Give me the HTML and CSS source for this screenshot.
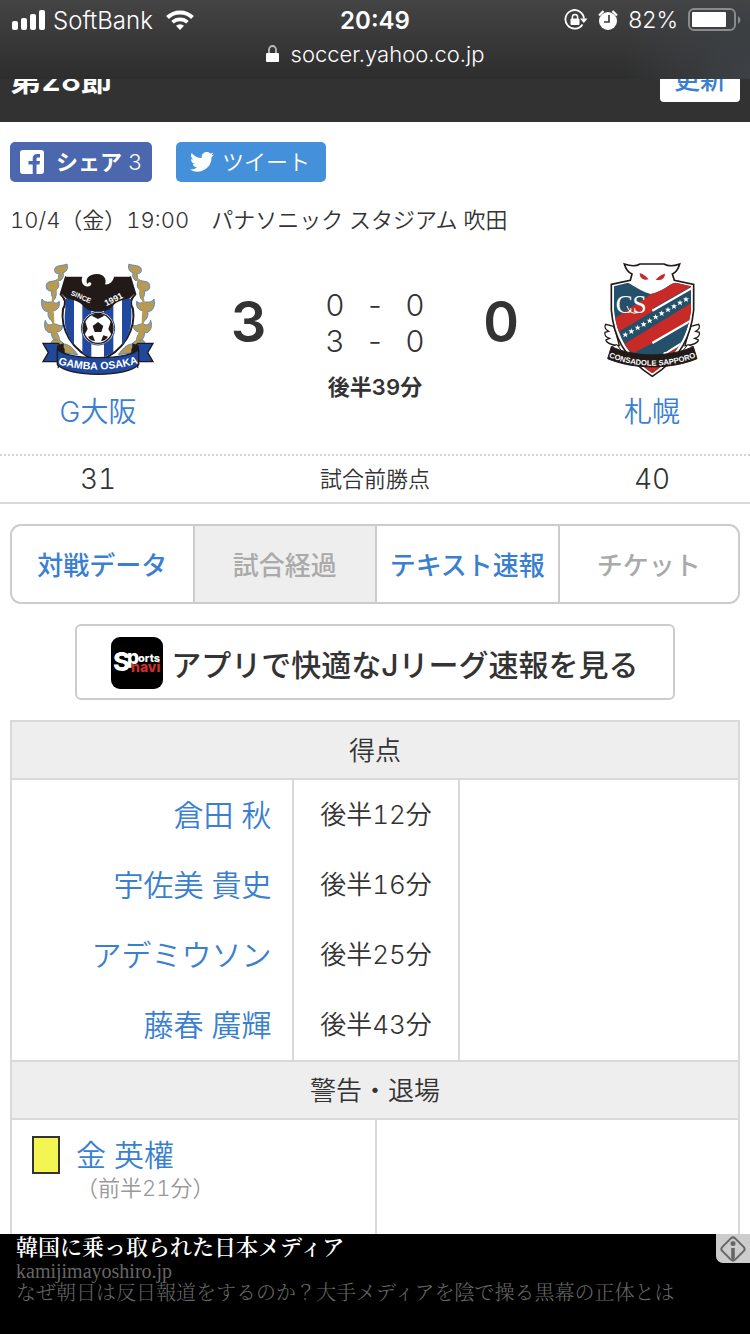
FILE: index.html
```html
<!DOCTYPE html>
<html lang="ja">
<head>
    <meta charset="UTF-8">
    <meta name="viewport" content="width=device-width, initial-scale=1.0">
    <title>G大阪 vs 札幌</title>
    <link rel="stylesheet" href="styles.css">
</head>
<body>
    <div class="browser-bar">
        <div class="status">
            <div class="status-left">
                <svg width="34" height="20" viewBox="0 0 34 20" fill="#fff">
                    <rect x="0" y="11" width="6" height="9" rx="2"/>
                    <rect x="9" y="8" width="6" height="12" rx="2"/>
                    <rect x="18" y="4" width="6" height="16" rx="2"/>
                    <rect x="27" y="0" width="6" height="20" rx="2"/>
                </svg>
                <span class="carrier">SoftBank</span>
                <svg class="wifi" width="28" height="20" viewBox="0 0 28 20">
                    <path d="M1.500 7.500A18 18 0 0 1 26.500 7.500" fill="none" stroke="#fff" stroke-width="4"/>
                    <path d="M6.500 12.300A11 11 0 0 1 21.500 12.300" fill="none" stroke="#fff" stroke-width="3.600"/>
                    <path d="M10 15.800A6 6 0 0 1 18 15.800L14 20Z" fill="#fff"/>
                </svg>
            </div>
            <span class="time">20:49</span>
            <div class="status-right">
                <svg width="24" height="22" viewBox="0 0 24 22">
                    <path d="M18.500 15.500A9.300 9.300 0 1 1 20 9.500" fill="none" stroke="#fff" stroke-width="1.800"/>
                    <path d="M16 9.500H23.500L19.800 14Z" fill="#fff"/>
                    <rect x="6.500" y="9.500" width="9" height="6.500" rx="1" fill="#fff"/>
                    <path d="M8.400 10V8a2.600 2.600 0 0 1 5.200 0V10" fill="none" stroke="#fff" stroke-width="1.500"/>
                </svg>
                <svg width="20" height="20" viewBox="0 0 20 20">
                    <circle cx="10" cy="11" r="9" fill="#fff"/>
                    <path d="M1 5.500L5.500 1M19 5.500L14.500 1" stroke="#fff" stroke-width="2.200"/>
                    <path d="M11 5V12H6" fill="none" stroke="#3e3e3e" stroke-width="1.700"/>
                </svg>
                <span class="percent">82%</span>
                <svg width="54" height="24" viewBox="0 0 54 24">
                    <rect x="1" y="1" width="46" height="21" rx="5" fill="none" stroke="#8b8b8b" stroke-width="2"/>
                    <rect x="4" y="4" width="34" height="15" rx="1" fill="#fff"/>
                    <path d="M50 8Q55 12 50 16Z" fill="#8b8b8b"/>
                </svg>
            </div>
        </div>
        <div class="address">
            <svg width="13" height="18" viewBox="0 0 13 18">
                <path d="M3 9V4.500a3.500 3.500 0 0 1 7 0V9" fill="none" stroke="#bbb" stroke-width="1.800"/>
                <rect x="0" y="8" width="13" height="9" rx="1" fill="#fff"/>
            </svg>
            <span>soccer.yahoo.co.jp</span>
        </div>
    </div>

    <header class="page-header">
        <h1>第28節</h1>
        <button type="button" class="btn-reload">更新</button>
    </header>

    <main>
        <div class="share">
            <a href="#" class="btn-share">
                <svg width="24" height="24" viewBox="0 0 24 24">
                    <rect width="24" height="24" rx="3" fill="#fff"/>
                    <path d="M20 4V7.500H18C16.800 7.500 16.500 8 16.500 9V11H20L19.500 14.500H16.500V24H12.700V14.500H8.500V11H12.700V8.500C12.700 5.500 14.500 4 17 4Z" fill="#4b67ae"/>
                </svg>
                <b>シェア</b>
                <span>3</span>
            </a>
            <a href="#" class="btn-tweet">
                <svg width="24" height="20" viewBox="0 0 24 20">
                    <path fill="#fff" d="M24 2.400a10 10 0 0 1-2.800.8A5 5 0 0 0 23.300.4a10 10 0 0 1-3.100 1.200A4.900 4.900 0 0 0 11.800 6 14 14 0 0 1 1.700.9a4.900 4.900 0 0 0 1.500 6.600A5 5 0 0 1 1 6.900a4.900 4.900 0 0 0 3.900 4.900 5 5 0 0 1-2.200.1 4.900 4.900 0 0 0 4.600 3.400A10 10 0 0 1 0 17.500 14 14 0 0 0 21.500 5.100 10 10 0 0 0 24 2.400Z"/>
                </svg>
                <span>ツイート</span>
            </a>
        </div>
        <p class="match-info">10/4（金）19:00　パナソニック スタジアム 吹田</p>

        <section class="score-board">
            <a href="#" class="team">
                <svg class="crest" width="114" height="116" viewBox="64 40 342 348">
                    <g id="branch" fill="#b99a50" stroke="#4f8bd0" stroke-width="3">
                        <path d="M142 46C131 52 107 48 105 62C103 72 112 77 119 74C115 82 115 89 121 97C131 88 133 80 130 72C141 70 146 59 142 46Z"/>
                        <path d="M112 93C100 101 82 94 80 110C78 122 87 130 97 126C93 137 96 146 105 152C111 141 111 132 107 124C118 121 121 106 112 93Z"/>
                        <path d="M67 151C62 173 72 191 86 188C83 199 87 210 97 218C101 208 101 199 98 187C114 185 121 175 119 158C108 169 103 159 92 160C80 161 73 160 67 151Z"/>
                        <path d="M77 215C70 237 80 255 96 252C94 265 103 279 120 284C121 270 117 260 110 251C123 249 129 241 129 229C119 236 112 222 98 227C86 232 80 225 77 215Z"/>
                        <path d="M94 282C100 269 112 275 121 276L134 286C151 288 162 302 174 318L132 312Z"/>
                        <path fill="none" stroke="#b99a50" stroke-width="7" d="M119 86C106 106 112 120 104 140C94 160 98 190 100 205C98 230 108 255 118 276"/>
                    </g>
                    <use href="#branch" transform="translate(470 0) scale(-1 1)"/>
                    <path fill="#fff" stroke="#211a18" stroke-width="6" d="M138 87L180 120H290L332 87L347 137C332 152 330 163 340 181C348 235 320 306 235 338C150 306 122 235 130 181C140 163 138 152 123 137Z"/>
                    <path fill="#20489f" d="M137 150H163V290C132 250 133 211 137 181ZM188 150H215V326L188 314ZM253 150H281V312L253 326ZM307 150H333C338 211 338 250 307 290Z"/>
                    <path fill="#211a18" d="M138 84H188C184 95 187 109 199 113C209 116 216 110 215 103C209 98 206 102 203 106C196 91 206 77 232 76C254 76 262 93 256 107C267 109 280 100 283 84H332L347 133L329 150C310 150 286 162 279 172C266 190 253 182 235 195C217 182 204 190 191 172C184 162 160 150 141 150L123 133Z"/>
                    <text transform="translate(152 138) rotate(24)" class="crest-small">SINCE</text>
                    <text transform="translate(260 173) rotate(-27)" class="crest-year">1991</text>
                    <circle cx="235" cy="239" r="50" fill="#fff" stroke="#20489f" stroke-width="3"/>
                    <circle cx="235" cy="239" r="45" fill="#fff" stroke="#211a18" stroke-width="4"/>
                    <path fill="#211a18" d="M235 220L251 232L245 250H225L219 232ZM216 201Q235 188 254 201L235 211ZM274 216Q285 239 276 259L266 241ZM196 216Q185 239 194 259L204 241ZM205 264L219 260L226 277Q213 277 205 264ZM265 264L251 260L244 277Q257 277 265 264Z"/>
                    <path fill="#20489f" stroke="#211a18" stroke-width="4" d="M70 284H116L133 302V341L116 355V339H70L86 312ZM400 284H354L337 302V341L354 355V339H400L384 312Z"/>
                    <path fill="#211a18" d="M132 284L132 320L112 305V291ZM338 284V320L358 305V291Z"/>
                    <path fill="#20489f" stroke="#211a18" stroke-width="4" d="M113 300C122 318 175 327 235 327C295 327 348 318 357 300V348C340 367 290 377 235 377C180 377 130 367 113 348Z"/>
                    <path id="gambaArc" fill="none" d="M117 347Q235 380 354 344"/>
                    <text class="crest-gamba" text-anchor="middle"><textPath href="#gambaArc" startOffset="50%">GAMBA OSAKA</textPath></text>
                </svg>
                <span>G大阪</span>
            </a>
            <strong class="total">3</strong>
            <div class="halves">
                <div class="half"><span>0</span><span>-</span><span>0</span></div>
                <div class="half"><span>3</span><span>-</span><span>0</span></div>
                <p class="clock">後半39分</p>
            </div>
            <strong class="total">0</strong>
            <a href="#" class="team">
                <svg class="crest" width="98" height="116" viewBox="70 36 294 348">
                    <path id="feathers" fill="#fff" stroke="#211a18" stroke-width="4" d="M102 229L78 223C72 231 78 239 87 244L76 247C73 256 80 262 90 265L79 270C80 281 96 284 119 287L109 249Z"/>
                    <use href="#feathers" transform="translate(435 0) scale(-1 1)"/>
                    <path fill="#fff" stroke="#211a18" stroke-width="5" d="M95 103L152 91L157 72C147 68 138 56 134 42C151 48 170 49 181 42H253C265 49 284 48 300 42C296 56 288 68 278 72L284 91L342 103V180C335 254 306 322 218 379C130 322 101 254 95 180Z"/>
                    <clipPath id="sapporoShield"><path d="M103 109L145 98C165 108 178 121 213 132C255 122 270 100 288 98L334 109V180C326 247 299 313 218 370C137 313 110 247 103 180Z"/></clipPath>
                    <g clip-path="url(#sapporoShield)">
                        <path fill="#24506a" d="M95 90H340V380H95Z"/>
                        <path fill="#c82b27" d="M95 212L286 85L345 103L220 175V184L110 250ZM130 284L345 153V219L220 282L165 312ZM188 352L345 264V380H180Z"/>
                        <path fill="none" stroke="#fff" stroke-width="7" d="M218 182L340 112M252 312L340 260"/>
                        <path fill="#24506a" d="M160 310L218 280L340 212V250L260 305Z"/>
                        <path fill="none" stroke="#fff" stroke-width="7" d="M218 279L340 208"/>
                    </g>
                    <path id="star" fill="#fff" d="M137 245L139 251H146L141 255L143 262L137 258L131 262L133 255L128 251H135Z"/>
                    <use href="#star" x="18" y="-10"/>
                    <use href="#star" x="37" y="-21"/>
                    <use href="#star" x="55" y="-31"/>
                    <use href="#star" x="73" y="-42"/>
                    <use href="#star" x="91" y="-53"/>
                    <use href="#star" x="109" y="-64"/>
                    <use href="#star" x="128" y="-75"/>
                    <use href="#star" x="146" y="-85"/>
                    <use href="#star" x="164" y="-96"/>
                    <use href="#star" x="182" y="-106"/>
                    <path fill="#c82b27" d="M180 69C191 72 200 79 207 88C193 92 180 86 180 69ZM256 71C246 73 237 79 228 89C243 92 256 87 256 71Z"/>
                    <text x="108" y="188" class="crest-cs">CS</text>
                    <path d="M142 168Q151 195 173 188" fill="none" stroke="#fff" stroke-width="3"/>
                    <path fill="#211a18" stroke="#211a18" stroke-width="3" stroke-linejoin="round" d="M95 290C170 323 265 323 341 290L352 326C275 359 160 359 84 326Z"/>
                    <path fill="#fff" stroke="#211a18" stroke-width="3" d="M95 290L112 284L125 302ZM341 290L324 284L310 302Z"/>
                    <path id="sapporoArc" fill="none" d="M86 321Q218 373 350 321"/>
                    <text class="crest-sapporo" text-anchor="middle"><textPath href="#sapporoArc" startOffset="50%">CONSADOLE SAPPORO</textPath></text>
                </svg>
                <span>札幌</span>
            </a>
        </section>

        <div class="points">
            <span class="point">31</span>
            <span class="point-label">試合前勝点</span>
            <span class="point">40</span>
        </div>

        <nav class="tabs">
            <a href="#">対戦データ</a>
            <span class="current">試合経過</span>
            <a href="#">テキスト速報</a>
            <span>チケット</span>
        </nav>

        <a href="#" class="app-link">
            <svg width="52" height="52" viewBox="0 0 52 52">
                <rect width="52" height="52" rx="9" fill="#000"/>
                <text x="20" y="35" class="logo-red">navi</text>
                <text x="2" y="34" class="logo-white"><tspan class="logo-s">S</tspan><tspan class="logo-p" x="16" y="27">p</tspan><tspan x="27" y="25">orts</tspan></text>
            </svg>
            <span>アプリで快適なJリーグ速報を見る</span>
        </a>

        <table class="goals">
            <thead>
                <tr><th colspan="3">得点</th></tr>
            </thead>
            <tbody>
                <tr><td class="home"><a href="#">倉田 秋</a></td><td class="minute">後半12分</td><td></td></tr>
                <tr><td class="home"><a href="#">宇佐美 貴史</a></td><td class="minute">後半16分</td><td></td></tr>
                <tr><td class="home"><a href="#">アデミウソン</a></td><td class="minute">後半25分</td><td></td></tr>
                <tr><td class="home"><a href="#">藤春 廣輝</a></td><td class="minute">後半43分</td><td></td></tr>
            </tbody>
        </table>
        <table class="cards">
            <thead>
                <tr><th colspan="2">警告・退場</th></tr>
            </thead>
            <tbody>
                <tr>
                    <td>
                        <div class="booking">
                            <i class="yellow-card"></i>
                            <div>
                                <a href="#">金 英權</a>
                                <small>（前半21分）</small>
                            </div>
                        </div>
                    </td>
                    <td></td>
                </tr>
            </tbody>
        </table>
    </main>

    <aside class="ad">
        <a href="#" class="ad-title">韓国に乗っ取られた日本メディア</a>
        <p class="ad-url">kamijimayoshiro.jp</p>
        <p class="ad-text">なぜ朝日は反日報道をするのか？大手メディアを陰で操る黒幕の正体とは</p>
        <button type="button" class="ad-info" aria-label="広告">
            <svg width="28" height="28" viewBox="0 0 28 28">
                <rect x="5" y="5" width="18" height="18" rx="3" transform="rotate(45 14 14)" fill="none" stroke="#666" stroke-width="2"/>
                <circle cx="14" cy="8.500" r="2.500" fill="#666"/>
                <path d="M12.200 13H15.800V23L14 26L12.200 23Z" fill="#666"/>
            </svg>
        </button>
    </aside>
</body>
</html>
```
FILE: styles.css
```css
* {
    margin: 0;
    padding: 0;
    box-sizing: border-box;
}

body {
    font-family: Inter, "Noto Sans CJK JP", sans-serif;
    font-weight: 350;
    font-variant-numeric: tabular-nums;
    color: #333;
    background-color: #fff;
    padding-bottom: 60px;
}

a {
    color: #3a7fd0;
    text-decoration: none;
}

button {
    font-family: inherit;
    border: none;
    cursor: pointer;
}

svg {
    display: block;
    flex-shrink: 0;
}

/* browser chrome */
.browser-bar {
    position: fixed;
    top: 0;
    left: 0;
    width: 100%;
    height: 79px;
    background: radial-gradient(circle at 100% 100%, #3d4247, rgba(61, 66, 71, 0) 130px), linear-gradient(#444, #2d2d2d);
    color: #fff;
    font-family: Inter, sans-serif;
    font-weight: 350;
    font-variant-numeric: normal;
    z-index: 2;
}

.status {
    display: grid;
    grid-template-columns: 1fr auto 1fr;
    align-items: center;
    height: 40px;
    padding: 0 12px;
}

.status-left,
.status-right {
    display: flex;
    align-items: center;
    gap: 7px;
}

.wifi {
    margin-left: 6px;
}

.status-right {
    justify-content: flex-end;
    gap: 10px;
    margin-right: -4px;
}

.carrier,
.time {
    font-size: 24px;
}

.percent {
    font-size: 23px;
}

.time {
    font-weight: 600;
}

.address {
    display: flex;
    justify-content: center;
    align-items: center;
    gap: 12px;
    height: 28px;
    font-size: 22px;
}

/* page header */
.page-header {
    display: flex;
    justify-content: space-between;
    align-items: center;
    margin-top: 32px;
    height: 90px;
    padding: 0 10px;
    background-color: #323232;
    color: #fff;
}

.page-header h1 {
    font-size: 31px;
    font-weight: 600;
}

.btn-reload {
    width: 80px;
    height: 50px;
    border-radius: 4px;
    background-color: #fff;
    color: #3a7fd0;
    font-size: 26px;
    font-weight: 500;
}

.share {
    display: flex;
    gap: 24px;
    padding: 20px 10px;
}

.share a {
    display: flex;
    align-items: center;
    height: 40px;
    border-radius: 5px;
    color: #fff;
    font-size: 22px;
    line-height: 36px;
    white-space: nowrap;
}

.share b {
    font-weight: 700;
}

.btn-share {
    width: 142px;
    gap: 6px;
    padding: 0 10px;
    background-color: #4b67ae;
}

.btn-share b {
    margin-left: 6px;
}

.btn-tweet {
    width: 150px;
    gap: 8px;
    padding: 0 14px;
    background-color: #4590db;
}

.match-info {
    padding: 0 10px;
    font-size: 22px;
    line-height: 36px;
}

/* score */
.score-board {
    display: grid;
    grid-template-columns: 196fr 106fr 146fr 106fr 196fr;
    padding: 24px 0 22px;
    border-bottom: 2px dotted #d4d4d4;
    text-align: center;
}

.team {
    display: flex;
    flex-direction: column;
    align-items: center;
    gap: 14px;
    font-size: 28px;
    line-height: 40px;
}

.crest-small,
.crest-year,
.crest-gamba {
    font-family: "Liberation Sans", sans-serif;
    font-weight: 700;
    fill: #fff;
}

.crest-small {
    font-size: 21px;
}

.crest-year {
    font-size: 26px;
}

.crest-gamba {
    font-family: "Liberation Sans Narrow", "Liberation Sans", sans-serif;
    font-size: 32px;
}

.crest-cs {
    font-family: "Liberation Serif", serif;
    font-size: 76px;
    fill: #fff;
}

.crest-sapporo {
    font-family: "Liberation Sans Narrow", "Liberation Sans", sans-serif;
    font-size: 23px;
    font-weight: 700;
    fill: #fff;
}

.total {
    font-size: 56px;
    font-weight: 600;
    line-height: 120px;
}

.halves {
    padding-top: 25px;
}

.half {
    display: grid;
    grid-template-columns: 40px 40px 40px;
    justify-content: center;
    font-size: 30px;
    line-height: 36px;
}

.clock {
    padding-top: 12px;
    font-size: 22px;
    font-weight: 600;
    line-height: 32px;
}

.points {
    display: grid;
    grid-template-columns: 196fr 358fr 196fr;
    height: 48px;
    line-height: 46px;
    border-bottom: 2px solid #d9d9d9;
    text-align: center;
}

.point {
    font-size: 28px;
}

.point-label {
    font-size: 22px;
}

.tabs {
    display: grid;
    grid-template-columns: repeat(4, 1fr);
    margin: 20px 10px;
    font-size: 26px;
    font-weight: 500;
    line-height: 72px;
    text-align: center;
}

.tabs > * {
    padding-top: 4px;
    border: 2px solid #ccc;
    border-right: none;
}

.tabs > :first-child {
    border-radius: 11px 0 0 11px;
}

.tabs > :last-child {
    border-right: 2px solid #ccc;
    border-radius: 0 11px 11px 0;
}

.tabs span {
    color: #aaa;
}

.tabs .current {
    background-color: #eee;
}

.app-link {
    display: flex;
    justify-content: center;
    align-items: center;
    gap: 8px;
    width: 80%;
    height: 76px;
    margin: 0 auto 20px;
    padding-top: 2px;
    border: 2px solid #ccc;
    border-radius: 6px;
    color: #333;
    font-size: 30px;
    font-weight: 500;
}

.logo-white,
.logo-red {
    font-family: Inter, sans-serif;
    font-weight: 800;
    font-size: 11px;
    fill: #fff;
}

.logo-s {
    font-size: 26px;
}

.logo-p {
    font-size: 19px;
}

.logo-red {
    font-size: 14px;
    fill: #c9302c;
}

/* goals and bookings */
table {
    width: calc(100% - 20px);
    margin: 0 10px;
    border-collapse: separate;
    border-spacing: 0;
    table-layout: fixed;
    border: 2px solid #d9d9d9;
    border-bottom: none;
}

th {
    height: 58px;
    padding-bottom: 3px;
    background-color: #eee;
    border-bottom: 2px solid #d9d9d9;
    font-size: 26px;
    font-weight: 350;
}

td + td {
    border-left: 2px solid #d9d9d9;
}

.goals {
    table-layout: auto;
}

.goals td {
    width: 38.5%;
    height: 70px;
    padding-bottom: 5px;
    font-size: 30px;
}

.goals .home {
    padding-right: 20px;
    text-align: right;
}

.goals .minute {
    width: 23%;
    font-size: 26px;
    text-align: center;
}

.cards td {
    height: 140px;
    vertical-align: top;
}

.booking {
    display: flex;
    gap: 16px;
    padding: 16px 20px;
}

.booking a {
    display: block;
    font-size: 30px;
    line-height: 38px;
}

.booking small {
    display: block;
    color: #999;
    font-size: 22px;
    line-height: 28px;
}

.yellow-card {
    width: 28px;
    height: 38px;
    background-color: #f4f452;
    border: 2px solid #333;
}

/* bottom banner */
.ad {
    position: fixed;
    bottom: 0;
    left: 0;
    width: 100%;
    height: 100px;
    padding: 2px 16px;
    background-color: #000;
    color: #666;
    font-family: "Liberation Serif", "Noto Serif CJK JP", "Noto Sans CJK JP", serif;
    font-size: 20px;
    line-height: 22px;
}

.ad-title {
    display: block;
    color: #fff;
    font-size: 22px;
    font-weight: 600;
    line-height: 24px;
}

.ad-info {
    position: absolute;
    top: 0;
    right: 0;
    width: 34px;
    height: 29px;
    padding: 0 3px;
    background-color: #ccc;
    border-bottom-left-radius: 7px;
}
```
